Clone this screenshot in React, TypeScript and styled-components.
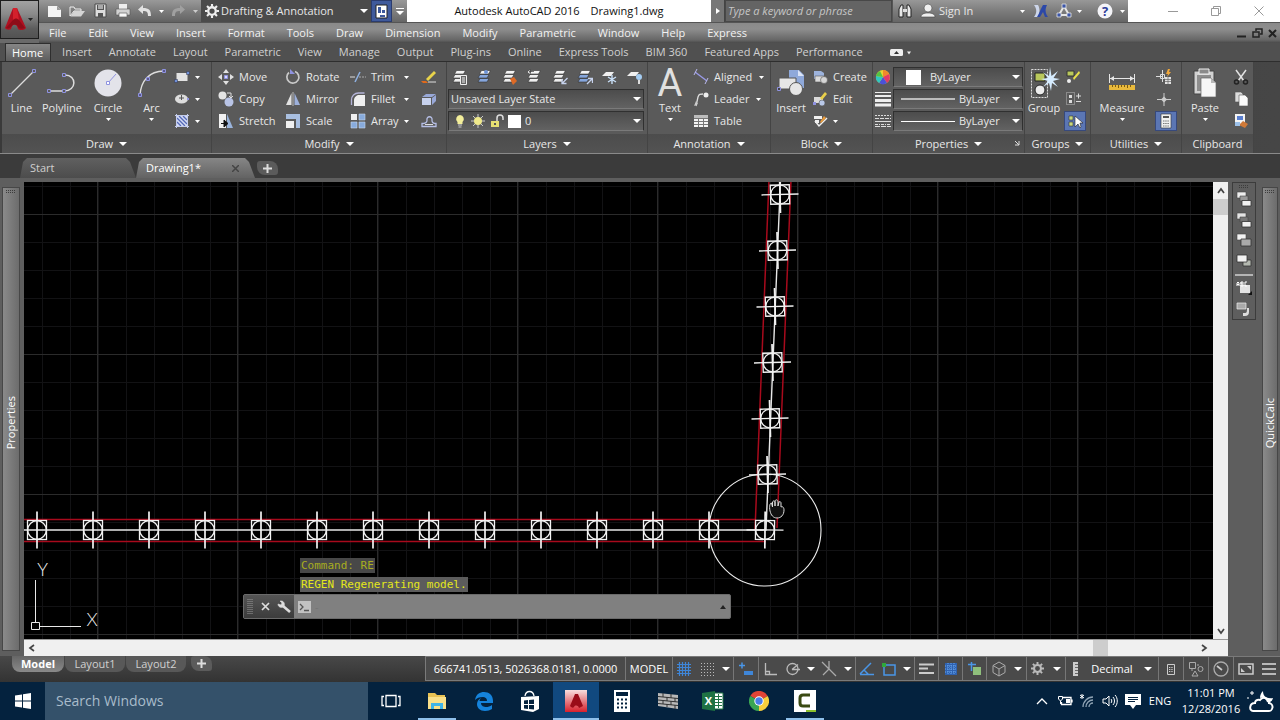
import React from "react";
import styled, { createGlobalStyle, css } from "styled-components";

const Global = createGlobalStyle`
  *, *::before, *::after { box-sizing: border-box; }
  html, body, #root { height: 100%; }
  body { margin: 0; background: #3a3a3a; overflow: hidden; }
  body, button, input, select {
    font-family: "Open Sans", "Noto Sans", sans-serif;
    font-size: 11px;
    line-height: 16px;
  }
  button, select, input { border: 0; padding: 0; margin: 0; color: inherit; background: none; border-radius: 0; }
  svg { display: block; flex: none; }
`;

const Shell = styled.div`
  display: flex;
  flex-direction: column;
  height: 100vh;
  min-height: 480px;
  color: #e8e8e8;
  white-space: nowrap;
`;

/* ---------- shared parts ---------- */

const row = css`
  display: flex;
  align-items: center;
`;

const Spacer = styled.div`
  flex: 1;
`;

type GlyphProps = { w?: number; h?: number; box?: string; children: React.ReactNode };
const Glyph = ({ w = 16, h = 16, box, children }: GlyphProps) => (
  <svg width={w} height={h} viewBox={box ?? `0 0 ${w} ${h}`} aria-hidden="true">
    {children}
  </svg>
);

const Caret = ({ color = "#fff", small = false }: { color?: string; small?: boolean }) =>
  small ? (
    <Glyph w={5} h={3}>
      <path d="M0 0h5L2.5 3z" fill={color} />
    </Glyph>
  ) : (
    <Glyph w={8} h={4}>
      <path d="M0 0h8L4 4z" fill={color} />
    </Glyph>
  );

/* ---------- header ---------- */

const Header = styled.header`
  display: grid;
  grid-template-columns: 39px 1fr;
  flex: none;
  background: #6a6a6a;
`;

const AppButton = styled.button`
  ${row}
  height: 39px;
  padding-left: 3px;
  border: 1px solid #1e1e1e;
  background: linear-gradient(#a2a2a2, #8a8a8a 35%, #5c5c5c 75%, #525252);
`;

const HeaderRows = styled.div`
  display: flex;
  flex-direction: column;
  min-width: 0;
`;

const TitleBar = styled.div`
  display: flex;
  height: 23px;
  background: #fff;
  border-bottom: 1px solid #555;
`;

const QuickAccess = styled.div`
  ${row}
  width: 162px;
  padding-left: 6px;
  background: linear-gradient(#999, #7c7c7c 50%, #626262);
`;

const IconButton = styled.button<{ $w?: number }>`
  display: flex;
  align-items: center;
  justify-content: center;
  flex: none;
  width: ${(p) => p.$w ?? 22}px;
  height: 22px;
`;

const Field = styled.div<{ $pad?: number; $gap?: number }>`
  ${row}
  position: relative;
  height: 20px;
  gap: ${(p) => p.$gap ?? 4}px;
  padding: 0 2px 0 ${(p) => p.$pad ?? 2}px;
  background: linear-gradient(#4c4c4c, #626262);
  border: 1px solid #303030;
  border-bottom-color: #7a7a7a;
`;

const Select = styled.select`
  appearance: none;
  flex: 1;
  min-width: 0;
  height: 18px;
  outline: none;
`;

const WorkspaceField = styled.div`
  ${row}
  width: 170px;
  gap: 2px;
  padding: 0 3px 0 4px;
  background: #4b4b4b;
`;

const SaveButton = styled.button`
  display: flex;
  align-items: center;
  justify-content: center;
  width: 21px;
  background: #3f5a9c;
  border: 1px solid #2b3c6e;
`;

const MoreButton = styled.button`
  display: flex;
  flex-direction: column;
  align-items: center;
  justify-content: center;
  gap: 2px;
  width: 15px;
  background: linear-gradient(#999, #666);
`;

const WindowTitle = styled.h1`
  ${row}
  justify-content: center;
  flex: 1;
  margin: 0;
  gap: 11px;
  color: #111;
  font-size: 11px;
  font-weight: 400;
`;

const SearchToggle = styled.button`
  display: flex;
  align-items: center;
  justify-content: center;
  width: 14px;
  background: #777;
  border-right: 1px solid #444;
`;

const Search = styled.input`
  width: 167px;
  padding-left: 2px;
  background: #646464;
  border: 1px solid #484848;
  font-style: italic;
  outline: none;
  &::placeholder {
    color: #c6c6c6;
    opacity: 1;
  }
`;

const Account = styled.div`
  ${row}
  width: 236px;
  padding-left: 1px;
  background: linear-gradient(#989898, #7c7c7c 50%, #666);
  border-left: 1px solid #555;
`;

const SignIn = styled.button`
  ${row}
  justify-content: space-between;
  width: 86px;
  margin-right: 4px;
`;

const WindowButtons = styled.div`
  ${row}
  justify-content: space-between;
  width: 152px;
  padding: 0 16px 0 40px;
`;

const MenuBar = styled.nav`
  ${row}
  height: 20px;
  padding: 0 1px 0 10px;
  gap: 22px;
  background: linear-gradient(#8a8a8a, #8e8e8e 30%, #666 85%, #4a4a4a);
`;

const MenuButton = styled.button`
  color: #f2f2f2;
`;

const ChildButtons = styled.div`
  ${row}
`;

/* ---------- ribbon ---------- */

const RibbonTabs = styled.div`
  display: flex;
  align-items: center;
  flex: none;
  height: 19px;
  padding-left: 5px;
  background: #505050;
  border-bottom: 1px solid #2e2e2e;
`;

const RibbonTab = styled.button<{ $active?: boolean }>`
  height: 18px;
  padding: 0 9px 0 8px;
  color: #d0d0d0;
  ${(p) =>
    p.$active &&
    css`
      color: #fff;
      background: linear-gradient(#868686, #5d5d5d);
      border: 1px solid #2e2e2e;
      border-bottom: 0;
      padding: 0 7px 0 6px;
      margin-right: 3px;
    `}
`;

const Ribbon = styled.div`
  display: flex;
  flex: none;
  height: 92px;
  padding-left: 2px;
  background: linear-gradient(90deg, #3a3a3a, #464646);
  border-bottom: 1px solid #8a8a8a;
`;

const Panel = styled.section<{ $w: number }>`
  display: flex;
  flex-direction: column;
  flex: none;
  width: ${(p) => p.$w}px;
  background: #5a5a5a;
  border-right: 1px solid #444;
`;

const PanelBody = styled.div<{ $pad?: number }>`
  display: flex;
  flex: 1;
  padding: 4px 0 0 ${(p) => p.$pad ?? 0}px;
`;

const PanelTitle = styled.button`
  ${row}
  position: relative;
  justify-content: center;
  gap: 6px;
  height: 19px;
  background: linear-gradient(#4c4c4c, #535353);
`;

const Launcher = styled.span`
  position: absolute;
  right: 4px;
  top: 6px;
`;

const BigTool = styled.button<{ $w: number }>`
  display: flex;
  flex-direction: column;
  align-items: center;
  flex: none;
  width: ${(p) => p.$w}px;
  height: 66px;
`;

const BigIcon = styled.span`
  display: flex;
  align-items: center;
  justify-content: center;
  height: 34px;
`;

const BigLetter = styled.span`
  height: 34px;
  font-family: Roboto, sans-serif;
  font-size: 38px;
  line-height: 34px;
  color: #e0e0e0;
`;

const BigLabel = styled.span`
  height: 18px;
`;

const Stack = styled.div<{ $w: number; $ml?: number }>`
  display: flex;
  flex-direction: column;
  flex: none;
  width: ${(p) => p.$w}px;
  margin-left: ${(p) => p.$ml ?? 0}px;
`;

const Tool = styled.button<{ $on?: boolean }>`
  ${row}
  height: 22px;
  gap: 4px;
  ${(p) =>
    p.$on &&
    css`
      justify-content: center;
      width: 22px;
      height: 20px;
      margin-top: 1px;
      background: #5b76b4;
      border: 1px solid #37497c;
    `}
`;

const ToolIcon = styled.span`
  display: flex;
  justify-content: center;
  width: 18px;
`;

const ToolLabel = styled.span<{ $hug?: boolean }>`
  flex: ${(p) => (p.$hug ? "none" : 1)};
  margin-right: ${(p) => (p.$hug ? 3 : 0)}px;
  text-align: left;
`;

const LayerColumn = styled.div`
  display: flex;
  flex-direction: column;
  flex: 1;
  padding-right: 3px;
`;

const LayerTools = styled.div`
  ${row}
  justify-content: space-between;
  height: 22px;
  padding: 0 1px 0 4px;
`;

const FieldRow = styled.label`
  ${row}
  height: 22px;
  & > div {
    flex: 1;
  }
`;

const PropIcon = styled.span`
  display: flex;
  justify-content: center;
  width: 20px;
`;

/* ---------- document tabs ---------- */

const FileTabs = styled.div`
  display: flex;
  align-items: flex-end;
  flex: none;
  height: 28px;
  padding-left: 20px;
  background: #3b3b3b;
  border-bottom: 4px solid #5e5e5e;
`;

const FileTab = styled.button<{ $active?: boolean }>`
  ${row}
  justify-content: space-between;
  width: ${(p) => (p.$active ? 119 : 116)}px;
  height: 20px;
  padding: 0 16px 0 10px;
  color: ${(p) => (p.$active ? "#fff" : "#cfcfcf")};
  background: ${(p) => (p.$active ? "linear-gradient(#868686, #636363)" : "linear-gradient(#606060, #4c4c4c)")};
  clip-path: polygon(0 100%, 3px 4px, 7px 0, calc(100% - 10px) 0, calc(100% - 6px) 4px, 100% 100%);
`;

const NewTab = styled.button`
  display: flex;
  align-items: center;
  justify-content: center;
  width: 21px;
  height: 14px;
  margin: 0 0 3px 2px;
  border-radius: 3px 8px 3px 8px;
  background: #5b5b5b;
`;

/* ---------- workspace ---------- */

const Workspace = styled.main`
  display: flex;
  flex: 1;
  min-height: 0;
  background: #5e5e5e;
`;

const Palette = styled.aside<{ $w: number }>`
  display: flex;
  flex-direction: column;
  align-items: center;
  flex: none;
  width: ${(p) => p.$w}px;
  margin: 5px 2px;
  padding-top: 2px;
  background: linear-gradient(90deg, #8a8a8a, #6c6c6c);
  border: 1px solid #474747;
`;

const PaletteName = styled.span`
  margin: auto 0;
  padding-bottom: 2px;
  writing-mode: vertical-rl;
  transform: rotate(180deg);
  color: #fff;
`;

const View = styled.div`
  display: grid;
  grid-template: 1fr 17px / 1fr 15px;
  flex: 1;
  min-width: 0;
  margin-left: 2px;
`;

const Canvas = styled.div`
  position: relative;
  overflow: hidden;
  background: #000;
`;

const Drawing = styled.svg`
  position: absolute;
  inset: 0;
  width: 100%;
  height: 100%;
`;

const VBar = styled.div`
  display: flex;
  flex-direction: column;
  align-items: center;
  background: #f0f0f0;
`;

const HBar = styled.div`
  ${row}
  grid-column: 1 / -1;
  padding-right: 17px;
  background: #f0f0f0;
  border-top: 1px solid #999;
`;

const HBarEnd = styled.div`
  width: 88px;
`;

const ScrollButton = styled.button`
  display: flex;
  align-items: center;
  justify-content: center;
  width: 15px;
  height: 17px;
`;

const Thumb = styled.div`
  width: 15px;
  height: 16px;
  background: #cdcdcd;
`;

const DrawOrder = styled.div`
  display: flex;
  flex-direction: column;
  align-items: center;
  align-self: flex-start;
  flex: none;
  width: 24px;
  height: 138px;
  margin: 0 4px;
  padding-top: 2px;
  border: 1px solid #3c3c3c;
`;

const DrawOrderButton = styled.button`
  display: flex;
  align-items: center;
  justify-content: center;
  width: 20px;
  height: 21px;
`;

const Divider = styled.hr`
  width: 18px;
  height: 2px;
  margin: 2px 0;
  border: 0;
  background: #b4b4b4;
`;

const CommandLine = styled.div`
  position: absolute;
  left: 219px;
  bottom: 20px;
  width: 488px;
`;

const Messages = styled.div`
  display: flex;
  flex-direction: column;
  align-items: flex-start;
  gap: 4px;
  padding: 0 0 2px 57px;
`;

const Message = styled.div<{ $dim?: boolean }>`
  padding: 0 1px;
  font: 11px/15px "DejaVu Sans Mono", "Liberation Mono", monospace;
  color: ${(p) => (p.$dim ? "#a9ad20" : "#e4e81a")};
  background: ${(p) => (p.$dim ? "#484848" : "#5c5c5c")};
`;

const Prompt = styled.div`
  display: flex;
  height: 25px;
  background: #808080;
  border: 1px solid #6a6a6a;
  border-radius: 2px;
`;

const PromptTools = styled.div`
  ${row}
  width: 50px;
  padding: 0 3px;
  justify-content: space-between;
  background: linear-gradient(#555, #3c3c3c);
`;

const PromptInput = styled.input`
  flex: 1;
  outline: none;
`;

const PromptIcon = styled.span`
  ${row}
  padding: 0 4px;
`;

/* ---------- status bar ---------- */

const StatusBar = styled.footer`
  display: flex;
  flex: none;
  height: 26px;
  padding-left: 12px;
  background: linear-gradient(#484848, #333);
`;

const LayoutTab = styled.button<{ $active?: boolean }>`
  width: ${(p) => (p.$active ? 52 : 60)}px;
  height: 16px;
  margin-right: 1px;
  border-radius: 0 0 8px 8px;
  color: ${(p) => (p.$active ? "#fff" : "#d0d0d0")};
  font-weight: ${(p) => (p.$active ? 700 : 400)};
  background: ${(p) => (p.$active ? "linear-gradient(#666, #8a8a8a)" : "#585858")};
`;

const NewLayout = styled(NewTab)`
  margin: 0 0 0 4px;
  height: 15px;
`;

const StatusCells = styled.div`
  display: flex;
  height: 25px;
  border: 1px solid #7a7a7a;
  border-right: 0;
  background: #4a4a4a;
`;

const Cell = styled.div<{ $w: number; $line?: boolean }>`
  ${row}
  justify-content: space-around;
  width: ${(p) => p.$w}px;
  color: #fff;
  border-right: ${(p) => (p.$line ? "1px solid #777" : "0")};
`;

const Bare = styled.button`
  ${row}
`;

/* ---------- task bar ---------- */

const TaskBar = styled.footer`
  display: flex;
  flex: none;
  height: 38px;
  background: #04223e;
`;

const StartButton = styled.button`
  display: flex;
  align-items: center;
  justify-content: center;
  width: 45px;
`;

const TaskSearch = styled.input`
  width: 323px;
  padding-left: 11px;
  background: #34516a;
  font-size: 14px;
  outline: none;
  &::placeholder {
    color: #a9bccb;
    opacity: 1;
  }
`;

const TaskButton = styled.button<{ $w?: number; $state?: "open" | "active" }>`
  display: flex;
  align-items: center;
  justify-content: center;
  width: ${(p) => p.$w ?? 46}px;
  ${(p) =>
    p.$state &&
    css`
      background-color: ${p.$state === "active" ? "#11497f" : "transparent"};
      background-image: linear-gradient(#8fc0ea, #8fc0ea);
      background-repeat: no-repeat;
      background-position: bottom;
      background-size: ${p.$state === "active" ? "100%" : "38px"} 2px;
    `}
`;

const Tray = styled.div`
  ${row}
  margin-left: auto;
  padding-right: 5px;
  color: #fff;
`;

const Clock = styled.time`
  width: 64px;
  margin-left: 4px;
  text-align: center;
`;

/* ---------- drawing content ---------- */

const Column = ({ x, y, turn = 0 }: { x: number; y: number; turn?: number }) => (
  <g transform={`translate(${x} ${y}) rotate(${turn})`} fill="none" stroke="#f2f2f2" strokeWidth="1.3">
    <rect x="-9.5" y="-9.5" width="19" height="19" />
    <circle r="9.3" />
    <path d="M0 -18.500V18.500" strokeWidth="1.7" />
    {turn !== 0 && <path d="M-18.500 0H18.500" />}
  </g>
);

const bottomRun = Array.from({ length: 13 }, (_, i) => 37 + i * 56);
const sideRun = Array.from({ length: 6 }, (_, i) => ({ x: 767.5 + i * 2.5, y: 474.5 - i * 56 }));

const Plan = () => (
  <Drawing aria-label="Drawing1 model space">
    <defs>
      <pattern id="minor" width="28" height="28" patternUnits="userSpaceOnUse" x="18" y="4">
        <path d="M.5 0V28M0 .5H28" stroke="#121214" fill="none" />
      </pattern>
      <pattern id="major" width="140" height="140" patternUnits="userSpaceOnUse" x="73" y="32">
        <path d="M.5 0V140M0 .5H140" stroke="#2b2b2b" fill="none" />
      </pattern>
    </defs>
    <rect width="100%" height="100%" fill="url(#minor)" />
    <rect width="100%" height="100%" fill="url(#major)" />
    <g transform="translate(-24 -182)" fill="none">
      <g stroke="#a80a1c" strokeWidth="1.5">
        <path d="M20 519.500H755M20 541.500H766M755 530L769 180M777 528L791 180" />
      </g>
      <path d="M20 530H766L780.500 180" stroke="#e8e8e8" strokeWidth="1.4" />
      {bottomRun.map((x) => (
        <Column key={x} x={x} y={530} />
      ))}
      <Column x={765} y={530} turn={0.5} />
      {sideRun.map((p) => (
        <Column key={p.y} x={p.x} y={p.y} turn={-1.5} />
      ))}
      <circle cx="765" cy="530" r="56" stroke="#eee" strokeWidth="1.1" />
      <path
        d="M770 511c-1-5 0-8 1.500-8l1 4v-5c1-2 2.500-1 2.500 0v4-5c1-2 2.500-1 3 0v5l1-4c1-1 2 0 2 1v4c2-1 3 1 3 3 0 5-3 8-7 8s-6-3-7-7z"
        stroke="#ddd"
        fill="#111"
      />
      <path d="M35.500 580V622M39 626.500H81M31.500 622.500h8v7h-8z" stroke="#e8e8e8" />
      <g fill="#eee" fontFamily="Lato, sans-serif" fontWeight="300" fontSize="18" textAnchor="middle">
        <text x="42.500" y="576">Y</text>
        <text x="92" y="626">X</text>
      </g>
    </g>
  </Drawing>
);

/* ---------- icons ---------- */

const node = "#8f92e0";

const I = {
  logo: (
    <Glyph w={24} h={26}>
      <path d="M9 1h4l9 20c-1 2-6 3-8 1l-1-3c-2-2-4-1-5 0l-1 3c-1 1-5 1-6-1z" fill="#b01020" />
      <path d="M9 1h4l2 12c-2-2-4-2-6 0z" fill="#d4202c" />
      <path d="M9 13c2-2 4-2 6 0l6 8c-3 1-6 1-7-1-1-3-4-3-6-1-2 2-4 3-6 2z" fill="#8e0c18" />
    </Glyph>
  ),
  newFile: (
    <Glyph>
      <path d="M1 3h9l4 4v7H1z" fill="#f4f4f4" />
      <path d="M10 3v4h4z" fill="#9a9a9a" />
    </Glyph>
  ),
  open: (
    <Glyph>
      <path d="M1 13V4h4l1 2h6v2H5z" fill="none" stroke="#eee" />
      <path d="M1.500 13.500L5 8h11l-4 5.500z" fill="#d4d4d4" />
    </Glyph>
  ),
  save: (
    <Glyph>
      <path d="M3 1h11v13H3z" fill="#ddd" stroke="#4a4a4a" />
      <path d="M5 2h7v5H5zM6 10h5v4H6z" fill="#555" />
      <path d="M6 3h5M6 5h5" stroke="#fff" />
    </Glyph>
  ),
  print: (
    <Glyph>
      <path d="M4 1h8v5H4z" fill="#eee" />
      <path d="M1 6h14v6H1z" fill="#d2d2d2" stroke="#555" strokeWidth=".6" />
      <path d="M4 10h8v4H4z" fill="#f8f8f8" stroke="#666" strokeWidth=".7" />
    </Glyph>
  ),
  undo: (
    <Glyph w={14} h={12}>
      <path d="M5 0v3c6 0 8 2 8 8h-3c0-4-1-5-5-5v3L0 4.500z" fill="#e2e2e2" />
    </Glyph>
  ),
  redo: (
    <Glyph w={14} h={12}>
      <path d="M9 0v3C3 3 1 5 1 11h3c0-4 1-5 5-5v3l5-4.500z" fill="#a0a0a0" />
    </Glyph>
  ),
  gear: (c = "#eee", s = 14) => (
    <Glyph w={s} h={s} box="0 0 16 16">
      <circle cx="8" cy="8" r="4.300" fill="none" stroke={c} strokeWidth="2.600" />
      <path
        d="M8 0v3M8 13v3M0 8h3M13 8h3M2.300 2.300l2.200 2.200M11.500 11.500l2.200 2.200M2.300 13.700l2.200-2.200M11.500 4.500l2.200-2.200"
        stroke={c}
        strokeWidth="2.400"
      />
    </Glyph>
  ),
  line: (
    <Glyph w={30} h={30}>
      <path d="M3 27L27 3" stroke="#ddd" strokeWidth="1.300" />
      <path d="M1.500 25.500h3v3h-3zM25.500 1.500h3v3h-3z" fill="#5a5a5a" stroke={node} />
    </Glyph>
  ),
  polyline: (
    <Glyph w={30} h={30}>
      <path d="M2 23h15c13 0 13-16 1-16" fill="none" stroke="#ddd" strokeWidth="1.500" />
      <path d="M.5 21.500h3v3h-3zM15.500 21.500h3v3h-3zM15.500 5.500h3v3h-3z" fill="#5a5a5a" stroke={node} />
    </Glyph>
  ),
  circle: (
    <Glyph w={30} h={30}>
      <circle cx="15" cy="15" r="13.500" fill="#e3e3ea" />
      <path d="M15 15l8-9" stroke={node} />
      <path d="M13.500 13.500h3v3h-3z" fill="#fff" stroke={node} />
    </Glyph>
  ),
  arc: (
    <Glyph w={30} h={30}>
      <path d="M3 27C4 13 12 3 27 3" fill="none" stroke="#ddd" strokeWidth="1.400" />
      <path d="M1.500 25.500h3v3h-3zM9.500 9.500h3v3h-3zM25.500 1.500h3v3h-3z" fill="#5a5a8a" stroke={node} />
    </Glyph>
  ),
  rect: (
    <Glyph>
      <path d="M2.500 4h11v8h-11z" fill="#e2e2e2" />
      <path d="M.5 10.500h3v3h-3zM12.500 2.500h3v3h-3z" fill="#6f8fd6" stroke="#334" strokeWidth=".5" />
    </Glyph>
  ),
  ellipse: (
    <Glyph>
      <ellipse cx="7.500" cy="8" rx="6.500" ry="4.500" fill="#ddd" />
      <path d="M7.500 4v5M5 7h5" stroke="#555" />
      <path d="M13 7h2v2h-2z" fill={node} />
    </Glyph>
  ),
  hatch: (
    <Glyph>
      <path d="M3 3h10v10H3z" fill="#d4dcf4" />
      <path d="M3 5l8 8M3 9l4 4M5 3l8 8M9 3l4 4" stroke="#5468b8" strokeWidth="1.300" />
      <path d="M1 2.500h14M1 13.500h14M2.500 1v14M13.500 1v14" stroke="#c4ccec" />
    </Glyph>
  ),
  move: (
    <Glyph>
      <path d="M8 0l3 4H5zM8 16l3-4H5zM0 8l4-3v6zM16 8l-4-3v6z" fill="#e0e0e0" />
      <path d="M6.500 6.500h3v3h-3z" fill="#d8d8ff" stroke={node} />
    </Glyph>
  ),
  copy: (
    <Glyph>
      <circle cx="4.500" cy="4.500" r="4" fill="#e4e4e4" />
      <circle cx="11" cy="11" r="4.500" fill="#b9c4e6" />
      <path d="M9 2h4v4M11 5l2 2 2-2" fill="none" stroke="#ddd" />
    </Glyph>
  ),
  stretch: (
    <Glyph>
      <path d="M1 1h7v14H1z" fill="#f2f2f2" />
      <path d="M9 1l6 14H9z" fill="#9ab4dc" />
      <path d="M3 10.500h4M6 7l4 3.500L6 14z" stroke="#111" fill="#111" />
    </Glyph>
  ),
  rotate: (
    <Glyph>
      <path d="M4 3.500a6 6 0 1 0 6-1" fill="none" stroke="#c9c9c9" strokeWidth="1.700" />
      <path d="M5 0v5h5z" fill={node} />
    </Glyph>
  ),
  mirror: (
    <Glyph>
      <path d="M6.500 2v12H1z" fill="#e2e2e2" />
      <path d="M9.500 2v12H15z" fill="#9db0da" />
      <path d="M8 1v14" stroke="#bbb" />
    </Glyph>
  ),
  scale: (
    <Glyph>
      <path d="M1 1h14v14h-4V6H1z" fill="#a9bfe0" />
      <path d="M1 8h8v7H1z" fill="#f0f0f0" />
    </Glyph>
  ),
  trim: (
    <Glyph>
      <path d="M0 8h5" stroke="#ddd" />
      <path d="M5 13l5-10" stroke="#8fb0e0" strokeWidth="1.500" />
      <path d="M9 8h7" stroke="#aaa" strokeDasharray="2 1" />
    </Glyph>
  ),
  fillet: (
    <Glyph>
      <path d="M4 15V9c0-3 3-5 5-5h6v11z" fill="#efefef" />
      <path d="M1.500 14V9c0-4 3-7 7-7h6" fill="none" stroke="#b4b4d8" strokeWidth="1.300" />
    </Glyph>
  ),
  array: (
    <Glyph>
      <path d="M1 1h6v6H1z" fill="#f0f0f0" />
      <path d="M9 1h6v6H9zM1 9h6v6H1zM9 9h6v6H9z" fill="#88abdc" stroke="#c7d6ee" strokeWidth=".6" />
    </Glyph>
  ),
  pencil: (
    <Glyph>
      <path d="M5 10l8-8 2 2-8 8z" fill="#e8d34a" />
      <path d="M0 12h5l2 2H2z" fill="#e06a1c" />
      <path d="M7 13h8" stroke="#ddd" />
    </Glyph>
  ),
  explode: (
    <Glyph>
      <path d="M1 7h9v7H1z" fill="#c8d2ee" />
      <path d="M1 6l4-3h10l-4 3zM11 7l4-3v6l-4 4z" fill="#98a8d8" />
    </Glyph>
  ),
  offset: (
    <Glyph>
      <path d="M1 13.500h14v-3c-3 0-4-1-4-3 1-5-6-5-5 0 0 2-2 3-5 3z" fill="none" stroke="#b6bfe6" strokeWidth="1.300" />
      <path d="M4 11.500h8" stroke="#ddd" />
    </Glyph>
  ),
  bulb: (
    <Glyph w={12} h={16}>
      <path d="M6 2a4 4 0 0 1 2.500 7v2h-5V9A4 4 0 0 1 6 2z" fill="#f3ee9a" />
      <path d="M4 12h4M4.500 14h3" stroke="#ccc" />
    </Glyph>
  ),
  sun: (
    <Glyph>
      <path d="M8 1v14M1 8h14M3 3l10 10M13 3L3 13" stroke="#c8c8c8" />
      <circle cx="8" cy="8" r="4" fill="#efe98c" />
    </Glyph>
  ),
  unlock: (
    <Glyph w={14}>
      <path d="M1 8h8v6H1z" fill="#e6e072" />
      <path d="M7 8V5a3 3 0 0 1 6 0v2" fill="none" stroke="#ddd" strokeWidth="1.500" />
      <path d="M4 10h2v2H4z" fill="#555" />
    </Glyph>
  ),
  swatch: (s = 13) => (
    <Glyph w={s} h={s}>
      <path d={`M0 0h${s}v${s}H0z`} fill="#fff" />
    </Glyph>
  ),
  aligned: (
    <Glyph>
      <path d="M2 3l12 9" stroke="#9a9ae8" strokeWidth="1.300" />
      <path d="M4 0L1 6M15 9l-3 6" stroke="#b9b9ee" />
    </Glyph>
  ),
  leader: (
    <Glyph>
      <path d="M3 15l2-9c1-3 2-3 5-3" fill="none" stroke="#ddd" strokeWidth="1.300" />
      <circle cx="13" cy="4" r="2.500" fill="#eee" />
      <path d="M1 15l2-5 2 3z" fill="#ccc" />
    </Glyph>
  ),
  table: (
    <Glyph>
      <path d="M1 2h14v12H1z" fill="#f4f4f4" />
      <path d="M1 2h14v3H1z" fill="#bcbcbc" />
      <path d="M1 5.500h14M1 8.500h14M1 11.500h14M5.500 5v9M10.500 5v9" stroke="#777" />
    </Glyph>
  ),
  insert: (
    <Glyph w={30} h={30}>
      <path d="M13 2h10l5 5v13H13z" fill="#8fa9da" />
      <path d="M22 2v6h6z" fill="#dbe4f6" />
      <path d="M3 10h17v11H3z" fill="#e6e6e6" stroke="#555" />
      <circle cx="20" cy="21" r="6.500" fill="#e6e6e6" stroke="#555" />
      <path d="M1.500 19.500h3v3h-3z" fill="#444" stroke={node} />
    </Glyph>
  ),
  create: (
    <Glyph>
      <path d="M2 2h7l3 2v6H2z" fill="#9db3dc" />
      <path d="M3 7h9v6H3z" fill="#dadada" stroke="#555" strokeWidth=".6" />
      <circle cx="12" cy="11" r="3.500" fill="#d6d6d6" stroke="#555" strokeWidth=".6" />
    </Glyph>
  ),
  editBlock: (
    <Glyph>
      <path d="M2 6h9v6H2z" fill="#dadada" />
      <circle cx="10" cy="12" r="3" fill="#b9c8e8" stroke="#555" strokeWidth=".6" />
      <path d="M8 7l5-6 2 2-5 6z" fill="#e8cf4a" />
      <path d="M1 11h3v3H1z" fill={node} />
    </Glyph>
  ),
  attribs: (
    <Glyph>
      <path d="M2 3h8v3H2zM3 7h4v3H3z" fill="#f0f0f0" />
      <path d="M3 8l4 5 8-8" fill="none" stroke="#f0f0f0" strokeWidth="1.500" />
      <path d="M8 9l4-6 2 2-5 5z" fill="#e89a3a" />
    </Glyph>
  ),
  wheel: (
    <Glyph>
      <circle cx="8" cy="8" r="7" fill="#e8d432" />
      <path d="M8 8V1a7 7 0 0 1 6 4z" fill="#ef8a2a" />
      <path d="M8 8l6-3a7 7 0 0 1-2 9z" fill="#e23a68" />
      <path d="M8 8l4 6a7 7 0 0 1-8 0z" fill="#4a52d8" />
      <path d="M8 8l-4 6a7 7 0 0 1-3-7z" fill="#2fc7c0" />
      <path d="M8 8L1 7a7 7 0 0 1 4-5z" fill="#52c244" />
    </Glyph>
  ),
  weights: (
    <Glyph>
      <path d="M0 1.500h16" stroke="#eee" />
      <path d="M0 5h16" stroke="#eee" strokeWidth="2" />
      <path d="M0 9.500h16" stroke="#eee" strokeWidth="3" />
      <path d="M0 14h16" stroke="#eee" strokeWidth="3" />
    </Glyph>
  ),
  types: (
    <Glyph>
      <path d="M0 2.500h16" stroke="#ddd" strokeDasharray="2 1" />
      <path d="M0 5.500h16" stroke="#ddd" strokeDasharray="4 1" />
      <path d="M0 8.500h16" stroke="#ddd" />
      <path d="M0 11.500h16" stroke="#ddd" strokeDasharray="3 1 1 1" />
      <path d="M0 13.500h16" stroke="#ddd" strokeDasharray="5 1" />
    </Glyph>
  ),
  group: (
    <Glyph w={32} h={32}>
      <path d="M3.500 2.500h16v28h-16z" fill="none" stroke="#ddd" strokeDasharray="2 1" />
      <path d="M7 6h10v8H7z" fill="#b9c85c" stroke="#222" />
      <circle cx="12" cy="23" r="5" fill="#ececec" stroke="#222" />
      <path d="M22 0l1.500 9 6.500-5-4.500 7 6.500 1-7 2 5 6-6-4-1 8-2-8-6 4 5-6-7-2 7-1-5-6 6 4z" fill="#d6ecff" />
    </Glyph>
  ),
  groupEdit: (
    <Glyph>
      <path d="M2 2h7v5H2z" fill="#b9c85c" stroke="#333" />
      <path d="M8 9l6-7 1 2-6 7z" fill="#e8e04a" />
      <circle cx="4" cy="12" r="2" fill="#eee" />
    </Glyph>
  ),
  groupAdd: (
    <Glyph>
      <path d="M1.500 1.500h8v12h-8z" fill="none" stroke="#bbb" strokeDasharray="1 1" />
      <path d="M4 4h3v3H4zM4 9h3v3H4z" fill="#ddd" />
      <path d="M11 5h5M13.500 2.500v5M11 10.500h5" stroke="#ddd" />
    </Glyph>
  ),
  groupPick: (
    <Glyph>
      <path d="M2 3h4v4H2zM2 9h4v4H2z" fill="#c9d87c" stroke="#333" strokeWidth=".6" />
      <path d="M8 3v11l3-3 2 4 1-1-1-4h3z" fill="#fff" stroke="#222" strokeWidth=".6" />
    </Glyph>
  ),
  measure: (
    <Glyph w={30} h={30}>
      <path d="M2.500 6v9M27.500 6v9M3 10.500h24" stroke="#e6e6e6" />
      <path d="M3 10.500l4-2.500v5zM27 10.500l-4-2.500v5z" fill="#e6e6e6" />
      <path d="M2 17h26v5H2z" fill="#e8b93c" />
      <path d="M5.500 17v2M8.500 17v2M11.500 17v3M14.500 17v2M17.500 17v2M20.500 17v3M23.500 17v2" stroke="#7a5a10" />
    </Glyph>
  ),
  quickSelect: (
    <Glyph>
      <path d="M0 7.500h7M6.500 1v12" stroke="#ddd" />
      <path d="M4.500 5.500h4v4h-4z" fill="none" stroke="#ddd" />
      <path d="M9 8h6v7H9z" fill="#e2e2e2" />
      <path d="M9 10.500h6M9 12.500h6M12 8v7" stroke="#666" strokeWidth=".7" />
      <path d="M12 0l-2 5h2l-1 3 4-5h-2l1-3z" fill="#f2a83a" />
    </Glyph>
  ),
  point: (
    <Glyph>
      <path d="M8 2v13M1 8.500h14" stroke="#ccc" />
      <path d="M8 5.500l3 3-3 3-3-3z" fill="#ccc" />
    </Glyph>
  ),
  calc: (
    <Glyph>
      <path d="M3 1h10v14H3z" fill="#f0f0f0" stroke="#333" strokeWidth=".6" />
      <path d="M5 3h6v2H5z" fill="#555" />
      <path d="M5 8h6M5 10.500h6M5 13h6" stroke="#777" strokeDasharray="1.500 .7" />
    </Glyph>
  ),
  paste: (
    <Glyph w={30} h={30}>
      <path d="M4 3h20v23H4z" fill="#d2d2d2" stroke="#444" />
      <path d="M9 1h10v5H9z" fill="#8a8a8a" stroke="#eee" />
      <path d="M7 7h14v16H7z" fill="#8e8e8e" />
      <path d="M11 10h10l5 5v14H11z" fill="#f6f6f6" stroke="#666" strokeWidth=".7" />
      <path d="M21 10v5h5z" fill="#b8b8b8" />
    </Glyph>
  ),
  cut: (
    <Glyph>
      <path d="M3 1l8 11M13 1L5 12" stroke="#e2e2e2" strokeWidth="1.500" />
      <circle cx="3.500" cy="13" r="2" fill="none" stroke="#222" strokeWidth="1.500" />
      <circle cx="12.500" cy="13" r="2" fill="none" stroke="#222" strokeWidth="1.500" />
    </Glyph>
  ),
  copyClip: (
    <Glyph>
      <path d="M2 1h6l2 2v8H2z" fill="#dcdcdc" stroke="#555" strokeWidth=".6" />
      <path d="M6 4h6l3 3v8H6z" fill="#fafafa" stroke="#555" strokeWidth=".6" />
    </Glyph>
  ),
  matchProps: (
    <Glyph>
      <path d="M2 1h10v10H2z" fill="#f4f4f4" />
      <path d="M4 3h6v4H4z" fill="#5a7fd0" />
      <path d="M6 12l4-4 5 3-3 4z" fill="#d07a38" />
      <path d="M2 9h5v4H2z" fill="#9cc0e8" />
    </Glyph>
  ),
};

const LayerIcon = ({ tint = "#eee", children }: { tint?: string; children?: React.ReactNode }) => (
  <Glyph>
    <g stroke="#333" strokeWidth=".6">
      <path d="M3 9.500h9l-2 3.500H1z" fill={tint} />
      <path d="M3 5.500h9l-2 3.500H1z" fill={tint} />
      <path d="M4.500 1.500h9l-2 3.500h-9z" fill="#f4f4f4" />
    </g>
    {children}
  </Glyph>
);

const SmallLayer = ({ children }: { children: React.ReactNode }) => (
  <Glyph>
    <path d="M4 3h8l-3 4H0z" fill="#f0f0f0" />
    {children}
  </Glyph>
);

const layerTools: { name: string; tint?: string; mark: React.ReactNode }[] = [
  { name: "Layer properties", mark: <path d="M8.500 6.500h6v9h-6zM10 9h3M10 11h3M10 13h3" fill="#666" stroke="#f0f0f0" /> },
  { name: "Make current", tint: "#86a6dc", mark: <circle cx="9" cy="3" r="2" fill="#6f95d8" /> },
  { name: "Match", mark: <path d="M8 10l4-2 3 4-4 4z" fill="#dd6a26" /> },
  { name: "Previous", mark: <path d="M0 3l3-3v6zM2 2.500h5" fill="#ddd" stroke="#444" strokeWidth=".7" /> },
  { name: "Isolate", mark: <path d="M15.500 9l-5 5M10 10v4.500h4.500" fill="none" stroke="#c6d2ec" strokeWidth="1.300" /> },
  { name: "Unisolate", tint: "#86a6dc", mark: <path d="M10 15l5-5M11 9.500h4.500V14" fill="none" stroke="#c6d2ec" strokeWidth="1.300" /> },
];

const Order = ({ a, b, c }: { a: string; b: string; c?: string }) => (
  <Glyph>
    <path d="M1 1h9v6H1z" fill={a} stroke="#444" strokeWidth=".6" />
    {c && <path d="M4 5h8v5H4z" fill={c} stroke="#444" strokeWidth=".6" />}
    <path d={c ? "M6 9.500h9V15H6z" : "M5 6h10v7H5z"} fill={b} stroke="#333" strokeWidth=".8" />
  </Glyph>
);

/* ---------- data ---------- */

const menus = ["File", "Edit", "View", "Insert", "Format", "Tools", "Draw", "Dimension", "Modify", "Parametric", "Window", "Help", "Express"];
const ribbonTabs = ["Home", "Insert", "Annotate", "Layout", "Parametric", "View", "Manage", "Output", "Plug-ins", "Online", "Express Tools", "BIM 360", "Featured Apps", "Performance"];

/* ---------- pieces ---------- */

const Big = ({ w, icon, label, menu }: { w: number; icon: React.ReactNode; label: string; menu?: boolean }) => (
  <BigTool $w={w}>
    <BigIcon>{icon}</BigIcon>
    <BigLabel>{label}</BigLabel>
    {menu && <Caret small />}
  </BigTool>
);

type SmallProps = { icon: React.ReactNode; label?: string; menu?: boolean; hug?: boolean };
const Small = ({ icon, label, menu, hug }: SmallProps) => (
  <Tool>
    <ToolIcon>{icon}</ToolIcon>
    {label && <ToolLabel $hug={hug}>{label}</ToolLabel>}
    {menu && <Caret small />}
  </Tool>
);

const Title = ({ children, launcher, plain }: { children: string; launcher?: boolean; plain?: boolean }) => (
  <PanelTitle>
    {children}
    {!plain && <Caret />}
    {launcher && (
      <Launcher>
        <Glyph w={6} h={6}>
          <path d="M1 1l4 4M5 1v4H1" stroke="#ddd" fill="none" />
        </Glyph>
      </Launcher>
    )}
  </PanelTitle>
);

const Plus = () => (
  <Glyph w={9} h={9}>
    <path d="M4.500 0v9M0 4.500h9" stroke="#ddd" strokeWidth="2" />
  </Glyph>
);

const Chevron = ({ turn = 0, color = "#444" }: { turn?: number; color?: string }) => (
  <Glyph w={8} h={8}>
    <path d="M1 6l3-4 3 4" fill="none" stroke={color} strokeWidth="1.700" transform={`rotate(${turn} 4 4)`} />
  </Glyph>
);

const Grip = ({ vertical = false }: { vertical?: boolean }) =>
  vertical ? (
    <Glyph w={6} h={16}>
      <path d="M1 0v16M3 0v16M5 0v16" stroke="#999" strokeDasharray="1 1" />
    </Glyph>
  ) : (
    <Glyph w={10} h={4}>
      <path d="M0 .5h10M0 2.500h10" stroke="#3c3c3c" strokeDasharray="1 1" />
    </Glyph>
  );

const Sg = ({ children, w = 16 }: { children: React.ReactNode; w?: number }) => (
  <Bare>
    <Glyph w={w}>{children}</Glyph>
  </Bare>
);

/* ---------- page ---------- */

export default function App() {
  return (
    <Shell>
      <Global />
      <Header>
        <AppButton aria-label="Application menu">
          {I.logo}
          <Caret small color="#222" />
        </AppButton>
        <HeaderRows>
          <TitleBar>
            <QuickAccess>
              <IconButton $w={20} aria-label="New">{I.newFile}</IconButton>
              <IconButton $w={24} aria-label="Open">{I.open}</IconButton>
              <IconButton aria-label="Save">{I.save}</IconButton>
              <IconButton $w={23} aria-label="Print">{I.print}</IconButton>
              <IconButton aria-label="Undo">{I.undo}</IconButton>
              <IconButton $w={10} aria-label="Undo list"><Caret small /></IconButton>
              <IconButton $w={24} aria-label="Redo">{I.redo}</IconButton>
              <IconButton $w={10} aria-label="Redo list"><Caret small color="#ccc" /></IconButton>
            </QuickAccess>
            <WorkspaceField>
              {I.gear()}
              <Select aria-label="Workspace">
                <option>Drafting &amp; Annotation</option>
              </Select>
              <Caret />
            </WorkspaceField>
            <SaveButton aria-label="Toggle layout">
              <Glyph w={13} h={15}>
                <path d="M1 1h11v13H1z" fill="#fff" stroke="#222" />
                <path d="M3 3h3v6H3zM7 6h3v3H7zM5 11h5v2H5z" fill="#3f5a9c" />
              </Glyph>
            </SaveButton>
            <MoreButton aria-label="Customize">
              <Glyph w={8} h={1}><path d="M0 0h8v1H0z" fill="#fff" /></Glyph>
              <Caret />
            </MoreButton>
            <WindowTitle>
              <span>Autodesk AutoCAD 2016</span>
              <span>Drawing1.dwg</span>
            </WindowTitle>
            <SearchToggle aria-label="Collapse search">
              <Glyph w={4} h={6}><path d="M0 0l4 3-4 3z" fill="#fff" /></Glyph>
            </SearchToggle>
            <Search aria-label="Search" placeholder="Type a keyword or phrase" />
            <Account>
              <IconButton aria-label="Find">
                <Glyph>
                  <path d="M2 14V6l2-4h2v12zM10 14V2h2l2 4v8z" fill="#e8e8e8" stroke="#222" />
                  <path d="M6 6h4v3H6z" fill="#ddd" />
                </Glyph>
              </IconButton>
              <IconButton $w={23} aria-label="Account">
                <Glyph>
                  <circle cx="8" cy="5" r="4" fill="#f0f0f0" stroke="#444" strokeWidth=".6" />
                  <path d="M1 14c0-3 3-4 7-4s7 1 7 4z" fill="#f0f0f0" stroke="#444" strokeWidth=".6" />
                </Glyph>
              </IconButton>
              <SignIn>
                Sign In
                <Caret small />
              </SignIn>
              <IconButton $w={24} aria-label="Exchange">
                <Glyph>
                  <path d="M1 2h4c2 3 2 9 0 12H1c3-4 3-8 0-12z" fill="#cdd6ea" />
                  <path d="M14 2h-4C8 5 7 9 4 14h3l3-5 2 5h3c-3-4-3-8-1-12z" fill="#2c48a8" />
                </Glyph>
              </IconButton>
              <IconButton aria-label="Community">
                <Glyph>
                  <path d="M8 3L3 12h10z" fill="none" stroke="#e6e6e6" strokeWidth="2" />
                  <path d="M6 1h4v4H6zM1 10h4v4H1zM11 10h4v4h-4z" fill="#3c56a8" stroke="#e6e6e6" strokeWidth=".8" />
                </Glyph>
              </IconButton>
              <IconButton $w={8} aria-label="Community menu"><Caret small /></IconButton>
              <Spacer />
              <IconButton aria-label="Help">
                <Glyph>
                  <circle cx="8" cy="8" r="7.500" fill="#f4f4f8" />
                  <text x="8" y="13" textAnchor="middle" fontSize="13" fontWeight="700" fill="#2c3c98">?</text>
                </Glyph>
              </IconButton>
              <IconButton $w={12} aria-label="Help menu"><Caret small /></IconButton>
            </Account>
            <WindowButtons>
              <IconButton $w={10} aria-label="Minimize">
                <Glyph w={10} h={10}><path d="M0 5.500h10" stroke="#999" /></Glyph>
              </IconButton>
              <IconButton $w={10} aria-label="Restore">
                <Glyph w={10} h={10}><path d="M.5 2.500h7v7h-7zM2.500 2V.5h7v7H8" stroke="#999" fill="none" /></Glyph>
              </IconButton>
              <IconButton $w={10} aria-label="Close">
                <Glyph w={10} h={10}><path d="M.5.5l9 9M9.500.5l-9 9" stroke="#999" /></Glyph>
              </IconButton>
            </WindowButtons>
          </TitleBar>
          <MenuBar>
            {menus.map((m) => <MenuButton key={m}>{m}</MenuButton>)}
            <Spacer />
            <ChildButtons>
              <IconButton $w={16} aria-label="Minimize drawing">
                <Glyph w={9} h={9}><path d="M0 7.500h9" stroke="#222" strokeWidth="2" /></Glyph>
              </IconButton>
              <IconButton $w={16} aria-label="Restore drawing">
                <Glyph w={11} h={10}><path d="M1 4h6v5H1zM4 3V1h6v5H8" stroke="#222" fill="none" strokeWidth="1.500" /></Glyph>
              </IconButton>
              <IconButton $w={14} aria-label="Close drawing">
                <Glyph w={9} h={9}><path d="M1 1l7 7M8 1L1 8" stroke="#222" strokeWidth="2" /></Glyph>
              </IconButton>
            </ChildButtons>
          </MenuBar>
        </HeaderRows>
      </Header>

      <RibbonTabs role="tablist">
        {ribbonTabs.map((t, i) => (
          <RibbonTab key={t} role="tab" aria-selected={i === 0} $active={i === 0}>{t}</RibbonTab>
        ))}
        <IconButton $w={58} aria-label="Minimize ribbon">
          <Glyph w={21} h={7}>
            <rect width="13" height="7" rx="1.500" fill="#eee" />
            <path d="M4 5l2.500-3L9 5z" fill="#333" />
            <path d="M17 2.500h4l-2 3z" fill="#eee" />
          </Glyph>
        </IconButton>
      </RibbonTabs>

      <Ribbon>
        <Panel $w={210}>
          <PanelBody>
            <Big w={39} icon={I.line} label="Line" />
            <Big w={42} icon={I.polyline} label="Polyline" />
            <Big w={50} icon={I.circle} label="Circle" menu />
            <Big w={37} icon={I.arc} label="Arc" menu />
            <Stack $w={30} $ml={3}>
              <Small icon={I.rect} menu />
              <Small icon={I.ellipse} menu />
              <Small icon={I.hatch} menu />
            </Stack>
          </PanelBody>
          <Title>Draw</Title>
        </Panel>

        <Panel $w={235}>
          <PanelBody $pad={5}>
            <Stack $w={67}>
              <Small icon={I.move} label="Move" />
              <Small icon={I.copy} label="Copy" />
              <Small icon={I.stretch} label="Stretch" />
            </Stack>
            <Stack $w={65}>
              <Small icon={I.rotate} label="Rotate" />
              <Small icon={I.mirror} label="Mirror" />
              <Small icon={I.scale} label="Scale" />
            </Stack>
            <Stack $w={60}>
              <Small icon={I.trim} label="Trim" menu />
              <Small icon={I.fillet} label="Fillet" menu />
              <Small icon={I.array} label="Array" menu />
            </Stack>
            <Stack $w={18} $ml={11}>
              <Small icon={I.pencil} />
              <Small icon={I.explode} />
              <Small icon={I.offset} />
            </Stack>
          </PanelBody>
          <Title>Modify</Title>
        </Panel>

        <Panel $w={201}>
          <PanelBody $pad={1}>
            <LayerColumn>
              <LayerTools>
                {layerTools.map((t) => (
                  <Bare key={t.name} aria-label={t.name}><LayerIcon tint={t.tint}>{t.mark}</LayerIcon></Bare>
                ))}
                <Bare aria-label="Freeze">
                  <SmallLayer><path d="M10 6v9M6 8l8 5M14 8l-8 5" stroke="#c9e0f8" strokeWidth="1.400" /></SmallLayer>
                </Bare>
                <Bare aria-label="Off">
                  <SmallLayer><circle cx="12" cy="8" r="3" fill="#a5cdf2" /><path d="M12 11v4" stroke="#ddd" strokeWidth="2" /></SmallLayer>
                </Bare>
              </LayerTools>
              <FieldRow>
                <Field>
                  <Select aria-label="Layer state"><option>Unsaved Layer State</option></Select>
                  <Caret />
                </Field>
              </FieldRow>
              <FieldRow>
                <Field $pad={5}>
                  {I.bulb}
                  {I.sun}
                  {I.unlock}
                  {I.swatch()}
                  <Select aria-label="Layer"><option>0</option></Select>
                  <Caret />
                </Field>
              </FieldRow>
            </LayerColumn>
          </PanelBody>
          <Title>Layers</Title>
        </Panel>

        <Panel $w={123}>
          <PanelBody>
            <BigTool $w={44}>
              <BigLetter aria-hidden="true">A</BigLetter>
              <BigLabel>Text</BigLabel>
              <Caret small />
            </BigTool>
            <Stack $w={74}>
              <Small icon={I.aligned} label="Aligned" menu hug />
              <Small icon={I.leader} label="Leader" menu hug />
              <Small icon={I.table} label="Table" />
            </Stack>
          </PanelBody>
          <Title>Annotation</Title>
        </Panel>

        <Panel $w={102}>
          <PanelBody>
            <Big w={40} icon={I.insert} label="Insert" />
            <Stack $w={58}>
              <Small icon={I.create} label="Create" />
              <Small icon={I.editBlock} label="Edit" />
              <Small icon={I.attribs} menu />
            </Stack>
          </PanelBody>
          <Title>Block</Title>
        </Panel>

        <Panel $w={152}>
          <PanelBody>
            <Stack $w={150}>
              <FieldRow>
                <PropIcon>{I.wheel}</PropIcon>
                <Field $pad={12} $gap={9}>
                  {I.swatch(15)}
                  <Select aria-label="Colour"><option>ByLayer</option></Select>
                  <Caret />
                </Field>
              </FieldRow>
              <FieldRow>
                <PropIcon>{I.weights}</PropIcon>
                <Field $pad={7}>
                  <Glyph w={54} h={2}><path d="M0 0h54v2H0z" fill="#bbb" /></Glyph>
                  <Select aria-label="Lineweight"><option>ByLayer</option></Select>
                  <Caret />
                </Field>
              </FieldRow>
              <FieldRow>
                <PropIcon>{I.types}</PropIcon>
                <Field $pad={7}>
                  <Glyph w={54} h={1}><path d="M0 0h54v1H0z" fill="#fff" /></Glyph>
                  <Select aria-label="Linetype"><option>ByLayer</option></Select>
                  <Caret />
                </Field>
              </FieldRow>
            </Stack>
          </PanelBody>
          <Title launcher>Properties</Title>
        </Panel>

        <Panel $w={66}>
          <PanelBody>
            <Big w={38} icon={I.group} label="Group" />
            <Stack $w={22} $ml={1}>
              <Small icon={I.groupEdit} />
              <Small icon={I.groupAdd} />
              <Tool $on aria-label="Group selection">{I.groupPick}</Tool>
            </Stack>
          </PanelBody>
          <Title>Groups</Title>
        </Panel>

        <Panel $w={91}>
          <PanelBody>
            <Big w={62} icon={I.measure} label="Measure" menu />
            <Stack $w={22} $ml={2}>
              <Small icon={I.quickSelect} />
              <Small icon={I.point} />
              <Tool $on aria-label="Quick calculator">{I.calc}</Tool>
            </Stack>
          </PanelBody>
          <Title>Utilities</Title>
        </Panel>

        <Panel $w={72}>
          <PanelBody>
            <Big w={46} icon={I.paste} label="Paste" menu />
            <Stack $w={20} $ml={4}>
              <Small icon={I.cut} />
              <Small icon={I.copyClip} />
              <Small icon={I.matchProps} />
            </Stack>
          </PanelBody>
          <Title plain>Clipboard</Title>
        </Panel>
      </Ribbon>

      <FileTabs role="tablist">
        <FileTab role="tab" aria-selected={false}>Start</FileTab>
        <FileTab role="tab" aria-selected $active>
          Drawing1*
          <Glyph w={7} h={7}><path d="M0 0l7 7M7 0L0 7" stroke="#444" strokeWidth="1.500" /></Glyph>
        </FileTab>
        <NewTab aria-label="New drawing"><Plus /></NewTab>
      </FileTabs>

      <Workspace>
        <Palette $w={18}>
          <Grip />
          <PaletteName>Properties</PaletteName>
        </Palette>
        <View>
          <Canvas>
            <Plan />
            <CommandLine>
              <Messages>
                <Message $dim>Command: RE</Message>
                <Message>REGEN Regenerating model.</Message>
              </Messages>
              <Prompt>
                <PromptTools>
                  <Grip vertical />
                  <Bare aria-label="Close command line">
                    <Glyph w={9} h={9}><path d="M1 1l7 7M8 1L1 8" stroke="#ddd" strokeWidth="1.700" /></Glyph>
                  </Bare>
                  <Bare aria-label="Customize command line">
                    <Glyph w={14} h={14}>
                      <path d="M6 6l7 6" stroke="#ddd" strokeWidth="2.600" />
                      <path d="M3 1l2 2-1 2-3-1c0 3 3 4 5 3s2-5-1-6z" fill="#ddd" stroke="#ddd" strokeWidth=".6" />
                    </Glyph>
                  </Bare>
                </PromptTools>
                <PromptIcon>
                  <Glyph w={13} h={12}>
                    <path d="M0 0h13v12H0z" fill="#c2c2c2" />
                    <path d="M2 3l3 3-3 3M6 9.500h5" stroke="#555" fill="none" strokeWidth="1.300" />
                  </Glyph>
                </PromptIcon>
                <PromptInput aria-label="Command" placeholder="-" />
                <PromptIcon><Glyph w={6} h={4}><path d="M0 4l3-4 3 4z" fill="#222" /></Glyph></PromptIcon>
              </Prompt>
            </CommandLine>
          </Canvas>
          <VBar>
            <ScrollButton aria-label="Scroll up"><Chevron /></ScrollButton>
            <Thumb />
            <Spacer />
            <ScrollButton aria-label="Scroll down"><Chevron turn={180} /></ScrollButton>
          </VBar>
          <HBar>
            <ScrollButton aria-label="Scroll left"><Chevron turn={-90} /></ScrollButton>
            <Spacer />
            <Thumb />
            <HBarEnd />
            <ScrollButton aria-label="Scroll right"><Chevron turn={90} /></ScrollButton>
          </HBar>
        </View>
        <DrawOrder>
          <Grip />
          <DrawOrderButton aria-label="Bring to front"><Order a="#eee" b="#f2f2f2" c="#999" /></DrawOrderButton>
          <DrawOrderButton aria-label="Send to back"><Order a="#e4e4e4" b="#f2f2f2" c="#777" /></DrawOrderButton>
          <DrawOrderButton aria-label="Bring above"><Order a="#f2f2f2" b="#aaa" /></DrawOrderButton>
          <DrawOrderButton aria-label="Send under">
            <Glyph>
              <path d="M7 7h8v6H7z" fill="#b4b8b0" stroke="#333" strokeWidth=".8" />
              <path d="M1 2h10v7H1z" fill="#f2f2f2" stroke="#333" strokeWidth=".8" />
            </Glyph>
          </DrawOrderButton>
          <Divider />
          <DrawOrderButton aria-label="Text to front">
            <Glyph>
              <path d="M4 5h10v8H4z" fill="#e4e4e4" />
              <path d="M1 6V3l1-1 1 1v3M1 4.500h2M5 2v4h2V4H5V2h2v2M11 2H9v4h2" fill="none" stroke="#fff" />
              <path d="M12 15h4v-4z" fill="#111" />
            </Glyph>
          </DrawOrderButton>
          <DrawOrderButton aria-label="Hatch to back">
            <Glyph>
              <path d="M1 2h9v6H1z" fill="#aaa" stroke="#eee" strokeWidth=".7" />
              <path d="M13 7v4a4 4 0 0 1-4 4H7v-3h2c2 0 2-2 2-5z" fill="#ddd" />
            </Glyph>
          </DrawOrderButton>
        </DrawOrder>
        <Palette $w={16}>
          <Grip />
          <PaletteName>QuickCalc</PaletteName>
        </Palette>
      </Workspace>

      <StatusBar>
        <LayoutTab $active>Model</LayoutTab>
        <LayoutTab>Layout1</LayoutTab>
        <LayoutTab>Layout2</LayoutTab>
        <NewLayout aria-label="New layout"><Plus /></NewLayout>
        <Spacer />
        <StatusCells>
          <Cell $w={200} $line>666741.0513, 5026368.0181, 0.0000</Cell>
          <Cell $w={47} $line>MODEL</Cell>
          <Cell $w={61} $line>
            <Sg><path d="M3.500 1v14M6.500 1v14M9.500 1v14M12.500 1v14M1 3.500h14M1 6.500h14M1 9.500h14M1 12.500h14" stroke="#3f86d8" strokeWidth="1.200" /></Sg>
            <Sg><path d="M2 2.500h13M2 5.500h13M2 8.500h13M2 11.500h13M2 14.500h13" stroke="#bbb" strokeDasharray="1 2" /></Sg>
            <Caret />
          </Cell>
          <Cell $w={25} $line>
            <Sg><path d="M1 4.500h6M4 1.500v6" stroke="#4a96e8" strokeWidth="1.500" /><path d="M6 10h9v4H6z" fill="#3f86d8" /></Sg>
          </Cell>
          <Cell $w={97} $line>
            <Sg><path d="M3.500 2v11.500H15M4 10.500h3.500V14" stroke="#bbb" fill="none" strokeWidth="1.300" /></Sg>
            <Sg><circle cx="7.500" cy="8" r="5.500" stroke="#bbb" fill="none" strokeWidth="1.300" /><path d="M7 8.500h8M7 8.500l6-5" stroke="#bbb" strokeWidth="1.300" /></Sg>
            <Caret />
            <Sg><path d="M1 1l14 14M8 0v9M8 8l-6 6" stroke="#aaa" fill="none" strokeWidth="1.300" /></Sg>
            <Caret />
          </Cell>
          <Cell $w={59} $line>
            <Sg><path d="M1 13.500h14M1 13L12 2M5 9l4 4" stroke="#4a96e8" fill="none" strokeWidth="1.500" /></Sg>
            <Sg><path d="M3 4h11v10H3z" stroke="#4a96e8" fill="none" strokeWidth="1.500" /><path d="M1 2h4v4H1z" fill="#2fa83a" /></Sg>
            <Caret />
          </Cell>
          <Cell $w={24} $line>
            <Sg><path d="M0 3.500h15M0 7.500h9M0 12h15" stroke="#ccc" strokeWidth="2" /></Sg>
          </Cell>
          <Cell $w={24} $line>
            <Sg><path d="M2 2h12v12H2z" fill="#2f62b0" /><path d="M2 5h12M2 8h12M2 11h12M5 2v12M8 2v12M11 2v12" stroke="#6aa8f0" strokeDasharray="1 1" /></Sg>
          </Cell>
          <Cell $w={24} $line>
            <Sg><path d="M1 3.500h8M4.500 1v9" stroke="#4a96e8" strokeWidth="1.500" /><path d="M6 6h8v8H6z" fill="#8fbf7c" /></Sg>
          </Cell>
          <Cell $w={40} $line>
            <Sg><path d="M8 1l6 3.500v7L8 15l-6-3.500v-7zM2 4.500L8 8l6-3.500M8 8v7" stroke="#aaa" fill="none" /></Sg>
            <Caret />
          </Cell>
          <Cell $w={39} $line>
            <Bare aria-label="Workspace settings">{I.gear("#bbb", 13)}</Bare>
            <Caret />
          </Cell>
          <Cell $w={93} $line>
            <Sg w={8}><path d="M1 1h5v14H1z" fill="#ccc" /><path d="M3 3.500h3M3 6.500h3M3 9.500h3M3 12.500h3" stroke="#666" /></Sg>
            <span>Decimal</span>
            <Caret />
          </Cell>
          <Cell $w={25} $line>
            <Sg><path d="M4.500 3.500h7v10h-7z" fill="none" stroke="#ccc" /><path d="M6 6.500h4M6 8.500h4M6 10.500h4" stroke="#ccc" strokeDasharray="1 .7" /></Sg>
          </Cell>
          <Cell $w={25} $line>
            <Sg><path d="M1.500 1.500h6v6h-6zM4 8v2M4 15l3-5 3 5zM9 4h2" fill="none" stroke="#aaa" /><circle cx="12.500" cy="8" r="2.500" fill="none" stroke="#aaa" /></Sg>
          </Cell>
          <Cell $w={25} $line>
            <Sg><circle cx="8" cy="8" r="7" fill="none" stroke="#aaa" strokeWidth="1.300" /><path d="M4 5l5 4" stroke="#ccc" strokeWidth="1.700" /></Sg>
          </Cell>
          <Cell $w={46}>
            <Sg><path d="M1 3h14v10H1z" fill="none" stroke="#ccc" strokeWidth="1.500" /><path d="M9 5h4v4zM3 7v4h4z" fill="#ccc" /></Sg>
            <Sg><path d="M1 3h14M1 8h14M1 13h14" stroke="#ddd" strokeWidth="1.700" /></Sg>
          </Cell>
        </StatusCells>
      </StatusBar>

      <TaskBar>
        <StartButton aria-label="Start">
          <Glyph w={16} h={16}>
            <path d="M0 2.500l7-1V7.500H0zM8 1.300L16 0v7.500H8zM0 8.500h7v6l-7-1zM8 8.500h8V16l-8-1.300z" fill="#fff" />
          </Glyph>
        </StartButton>
        <TaskSearch aria-label="Search Windows" placeholder="Search Windows" />
        <TaskButton $w={45} aria-label="Task view">
          <Glyph w={20} h={16}>
            <path d="M5 2.500h10v11H5zM3 3.500H1v9h2M17 3.500h2v9h-2" fill="none" stroke="#fff" strokeWidth="1.300" />
          </Glyph>
        </TaskButton>
        <TaskButton $w={48} $state="open" aria-label="File Explorer">
          <Glyph w={20} h={18}>
            <path d="M1 1h7l2 2h8v3H1z" fill="#e8c254" />
            <path d="M1 5h18v12H1z" fill="#f9e08a" />
            <path d="M4 17v-6h12v6h-3v-3H7v3z" fill="#3fb4e8" />
          </Glyph>
        </TaskButton>
        <TaskButton aria-label="Edge">
          <Glyph w={20} h={20}>
            <path d="M1 9c1-6 5-8 9-8 5 0 9 3 9 9v2H7c0 3 3 4 5 4s4-.5 6-2v4c-2 1-4 2-7 2-5 0-8-3-8-7 0-3 2-5 4-6-1 1-1.500 2-1.500 3H13c0-3-2-4-4-4-4 0-6 1-8 3z" fill="#1583dc" />
          </Glyph>
        </TaskButton>
        <TaskButton aria-label="Store">
          <Glyph w={20} h={22}>
            <path d="M1 7l18-1v13l-6 3-12-2z" fill="#fff" />
            <path d="M5 6c1-6 8-6 9 0" fill="none" stroke="#fff" strokeWidth="1.300" />
            <path d="M4 10.500l4-.5v4H4zM9 10l5-.5V14H9zM4 15h4v4l-4-.5zM9 15h5v4.500L9 19z" fill="#04223e" />
          </Glyph>
        </TaskButton>
        <TaskButton $state="active" aria-label="AutoCAD">
          <Glyph w={22} h={22}>
            <defs>
              <linearGradient id="cad" x1="0" y1="0" x2="0" y2="1">
                <stop offset="0" stopColor="#f8dede" />
                <stop offset="1" stopColor="#d8202c" />
              </linearGradient>
            </defs>
            <path d="M0 0h22v22H0z" fill="url(#cad)" />
            <path d="M10 4h3l5 12-4 2c-1-3-4-3-5-1-1 1-2 1-4-1z" fill="#9a0c18" />
          </Glyph>
        </TaskButton>
        <TaskButton aria-label="Calculator">
          <Glyph w={18} h={22}>
            <path d="M1 0h16v22H1z" fill="#fff" />
            <path d="M3 2h12v4H3z" fill="#04223e" />
            <path d="M4 9.500h11M4 13.500h11M4 17.500h11" stroke="#04223e" strokeWidth="2" strokeDasharray="2 2" />
          </Glyph>
        </TaskButton>
        <TaskButton $w={45} aria-label="Firewall">
          <Glyph w={20} h={16}>
            <path d="M0 0l20 2v14L0 13z" fill="#b8b8b8" />
            <path d="M0 3.500l20 2M0 7l20 2M0 10.500l20 2M5 0v4M13 1v4M9 4v4M17 5v4M5 8v3M13 8v4M9 11v3M17 12v4" stroke="#333" />
          </Glyph>
        </TaskButton>
        <TaskButton aria-label="Excel">
          <Glyph w={22} h={20}>
            <path d="M10 2h11v16H10z" fill="#fff" stroke="#1f7244" />
            <path d="M13 5.500h7M13 8.500h7M13 11.500h7M13 14.500h7M16.500 3v14" stroke="#1f7244" />
            <path d="M0 2l13-2v20L0 18z" fill="#1f7244" />
            <text x="6.500" y="14" textAnchor="middle" fontSize="11" fontWeight="700" fill="#fff">X</text>
          </Glyph>
        </TaskButton>
        <TaskButton aria-label="Chrome">
          <Glyph w={20} h={20}>
            <path d="M10 10L1.300 5A10 10 0 0 1 18.700 5z" fill="#e24436" />
            <path d="M10 10h0l8.700-5A10 10 0 0 1 10 20z" fill="#f8ce3c" />
            <path d="M10 10v10A10 10 0 0 1 1.300 5z" fill="#3aa553" />
            <circle cx="10" cy="10" r="4.700" fill="#fff" />
            <circle cx="10" cy="10" r="3.700" fill="#4a7de8" />
          </Glyph>
        </TaskButton>
        <TaskButton $state="open" aria-label="Camtasia">
          <Glyph w={22} h={22}>
            <path d="M0 0h22v22H0z" fill="#fff" />
            <path d="M12 20h10v2H12z" fill="#8cbf2c" />
            <path d="M16 5H9c-2 0-3 1-3 3v5c0 2 1 3 3 3h7" fill="none" stroke="#3a4a12" strokeWidth="3" />
          </Glyph>
        </TaskButton>
        <Tray>
          <IconButton aria-label="Show hidden icons">
            <Glyph w={12} h={8}><path d="M1 7l5-5 5 5" fill="none" stroke="#fff" strokeWidth="1.300" /></Glyph>
          </IconButton>
          <IconButton $w={23} aria-label="Battery">
            <Glyph>
              <path d="M6 4.500h8v7H4.500V9M15 6.500v3" fill="none" stroke="#fff" strokeWidth="1.300" />
              <path d="M9 6h4v4H9z" fill="#fff" />
              <path d="M1.500 3.500h4V6l-2 2-2-2zM3.500 8v3" stroke="#fff" fill="none" />
            </Glyph>
          </IconButton>
          <IconButton aria-label="Network">
            <Glyph>
              <path d="M4 14A10 10 0 0 1 14 4M7 14a7 7 0 0 1 7-7M10 14a4 4 0 0 1 4-4" fill="none" stroke="#8fa3b4" strokeWidth="1.300" />
              <path d="M3 1v5M1 2l4 3M5 2L1 5" stroke="#fff" />
            </Glyph>
          </IconButton>
          <IconButton $w={23} aria-label="Volume">
            <Glyph>
              <path d="M1 6h3l3-3v10L4 10H1zM9 6c1 1 1 3 0 4M11 4c2 2 2 6 0 8M13 2c3 3 3 9 0 12" fill="none" stroke="#fff" />
            </Glyph>
          </IconButton>
          <IconButton $w={24} aria-label="Notifications">
            <Glyph>
              <path d="M0 1h16v11h-5l-3 4-3-4H0z" fill="#fff" />
              <path d="M3 4.500h10M3 6.500h10M3 8.500h7" stroke="#04223e" />
            </Glyph>
          </IconButton>
          <IconButton $w={30} aria-label="Keyboard language">ENG</IconButton>
          <Clock>11:01 PM<br />12/28/2016</Clock>
          <IconButton $w={32} aria-label="Weather">
            <Glyph w={29} h={24}>
              <path d="M8 22h15a4 4 0 0 0 1-8c0-5-6-7-9-3-3-1-5 1-5 3-6 0-6 8-2 8z" fill="none" stroke="#fff" strokeWidth="2" />
              <path d="M18 2c0 5 3 8 10 7-1 4-4 5-6 4-1-3-4-5-7-4 0-3 1-5 3-7z" fill="#fff" />
              <path d="M7 2v4M5 4h4M3 8v2" stroke="#fff" />
            </Glyph>
          </IconButton>
        </Tray>
      </TaskBar>
    </Shell>
  );
}
